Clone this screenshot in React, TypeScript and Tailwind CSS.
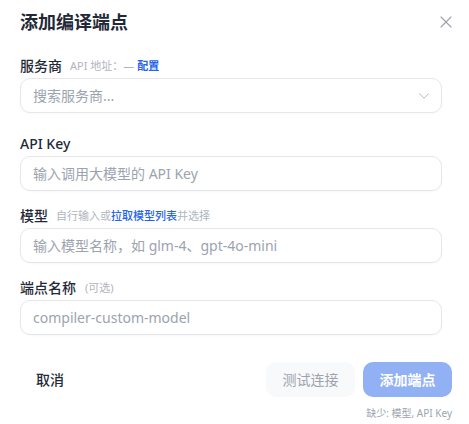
import React from "react";
import { X, ChevronDown } from "lucide-react";

const font = { fontFamily: '"Noto Sans", "Noto Sans CJK SC", sans-serif' };

function Field({ placeholder, right }: { placeholder: string; right?: React.ReactNode }) {
  return (
    <div className="flex h-[35px] items-center justify-between rounded-[10px] border border-[#e5e7eb] bg-white pl-[12px] pr-[8px] shadow-[0_1px_2px_rgba(0,0,0,0.03)]">
      <span className="text-[14px] leading-5 text-[#9ca3af]">{placeholder}</span>
      {right}
    </div>
  );
}

export default function App() {
  return (
    <div className="h-[424px] w-[469px] overflow-hidden bg-white pl-5 pr-[17px] text-[#1f2937]" style={font}>
      <div className="mt-[9px] flex h-[26px] items-center justify-between">
        <h1 className="text-[18px] font-bold leading-[26px] text-[#1f2937]">添加编译端点</h1>
        <X size={20} strokeWidth={1.4} className="mr-[-4px] text-[#9ca3af]" />
      </div>

      <div className="mr-[10px]">
        <div className="mt-[21px] flex h-5 items-center gap-[8px]">
          <span className="text-[14px] font-medium leading-5">服务商</span>
          <span className="text-[11px] leading-5 text-[#b0b5bd]">
            API 地址：— <span className="font-semibold text-[#2563eb]">配置</span>
          </span>
        </div>
        <div className="mt-[2px]">
          <Field placeholder="搜索服务商..." right={<ChevronDown size={18} strokeWidth={1.3} className="text-[#b0b5bd]" />} />
        </div>

        <div className="mt-[21px] flex h-5 items-center">
          <span className="text-[14px] font-medium leading-5">API Key</span>
        </div>
        <div className="mt-[2px]">
          <Field placeholder="输入调用大模型的 API Key" />
        </div>

        <div className="mt-[15px] flex h-5 items-center gap-[8px]">
          <span className="text-[14px] font-medium leading-5">模型</span>
          <span className="text-[11px] leading-5 text-[#b0b5bd]">
            自行输入或<span className="font-medium text-[#2563eb]">拉取模型列表</span>并选择
          </span>
        </div>
        <div className="mt-[2px]">
          <Field placeholder="输入模型名称，如 glm-4、gpt-4o-mini" />
        </div>

        <div className="mt-[15px] flex h-5 items-center gap-[9px]">
          <span className="text-[14px] font-medium leading-5">端点名称</span>
          <span className="text-[11px] leading-5 text-[#b0b5bd]">(可选)</span>
        </div>
        <div className="mt-[2px]">
          <Field placeholder="compiler-custom-model" />
        </div>
      </div>

      <div className="mt-[27px] flex items-center justify-between">
        <button className="h-[35px] rounded-[10px] px-4 text-[14px] font-medium text-[#1f2937]">取消</button>
        <div className="flex gap-2">
          <button className="h-[35px] w-[89px] rounded-[10px] bg-[#f8f9fb] text-[14px] text-[#9ca3af]">测试连接</button>
          <button className="h-[35px] w-[89px] rounded-[10px] bg-[#91b1f4] text-[14px] font-bold text-white">添加端点</button>
        </div>
      </div>
      <div className="mt-[9px] text-right text-[10px] leading-[14px] text-[#9ca3af]">缺少: 模型, API Key</div>
    </div>
  );
}
